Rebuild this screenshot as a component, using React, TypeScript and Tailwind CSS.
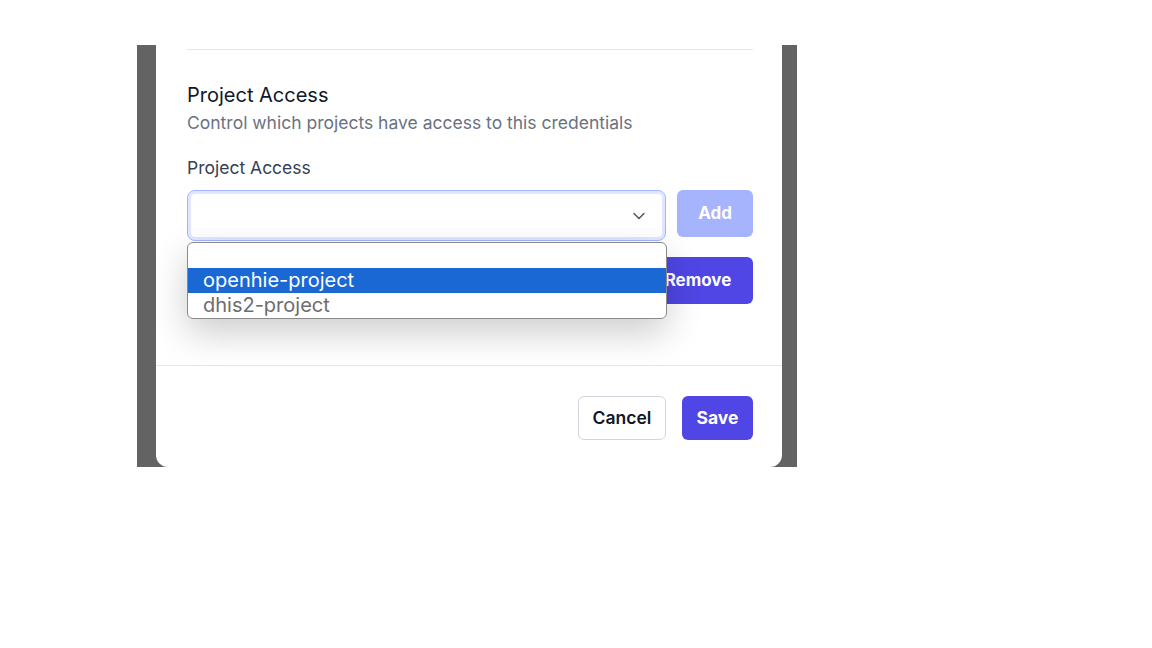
import { ChevronDown } from "lucide-react";

const projects = ["", "openhie-project", "dhis2-project"];

const ProjectDropdown = () => {
    return (
        <div className="absolute left-0 top-[52px] z-10 w-[480px] overflow-hidden rounded-md border border-[#8a8a8a] bg-white shadow-[0_14px_36px_rgba(0,0,0,0.2)]">
            {projects.map((p, i) => (
                <div
                    key={i}
                    className={
                        i === 1
                            ? "h-[25px] bg-[#1a68d4] pl-[15px] text-[20px] leading-[25px] text-white"
                            : "h-[25px] pl-[15px] text-[20px] leading-[25px] text-[#6d6d6d]"
                    }
                >
                    {p}
                </div>
            ))}
        </div>
    );
};

export default function App() {
    return (
        <div className="h-[648px] w-[1152px] bg-white [font-family:Inter,'Liberation_Sans',sans-serif]">
            <div className="pl-[137px] pt-[45px]">
                <div className="flex h-[422px] w-[660px] items-end bg-[#636363] pl-[19px]">
                    <div className="w-[626px] rounded-b-xl bg-white">
                        <div className="pb-[61px] pl-[31px] pr-[29px] pt-[5px]">
                            <div className="border-t border-gray-200" />
                            <h3 className="mt-[31px] text-[20px] leading-[28px] text-gray-900">Project Access</h3>
                            <p className="mt-[2px] text-[17.5px] leading-[24px] text-gray-500">
                                Control which projects have access to this credentials
                            </p>
                            <label className="mt-[21px] block text-[17.5px] leading-[24px] text-gray-700">
                                Project Access
                            </label>
                            <div className="relative mt-[10px]">
                                <div className="flex items-start gap-[11px]">
                                    <div className="flex h-[51px] w-[480px] items-center justify-end rounded-lg border border-indigo-300 pr-[16px] ring-[3px] ring-indigo-100 ring-inset">
                                        <ChevronDown className="h-5 w-5 text-gray-600" strokeWidth={1.75} />
                                    </div>
                                    <button className="h-[47px] w-[76px] rounded-md bg-[#a5b4fc] text-[17px] font-bold text-white">
                                        Add
                                    </button>
                                </div>
                                <div className="mt-[16px] flex justify-end">
                                    <button className="h-[47px] w-[110px] rounded-md bg-[#4f46e5] text-[17px] font-bold text-white">
                                        Remove
                                    </button>
                                </div>
                                <ProjectDropdown />
                            </div>
                        </div>
                        <div className="flex justify-end gap-[16px] border-t border-gray-200 pb-[27px] pl-[31px] pr-[29px] pt-[30px]">
                            <button className="h-[44px] w-[88px] rounded-md border border-gray-300 bg-white text-[17.5px] font-semibold text-gray-900">
                                Cancel
                            </button>
                            <button className="h-[44px] w-[71px] rounded-md bg-[#4f46e5] text-[17.5px] font-bold text-white">
                                Save
                            </button>
                        </div>
                    </div>
                </div>
            </div>
        </div>
    );
}
